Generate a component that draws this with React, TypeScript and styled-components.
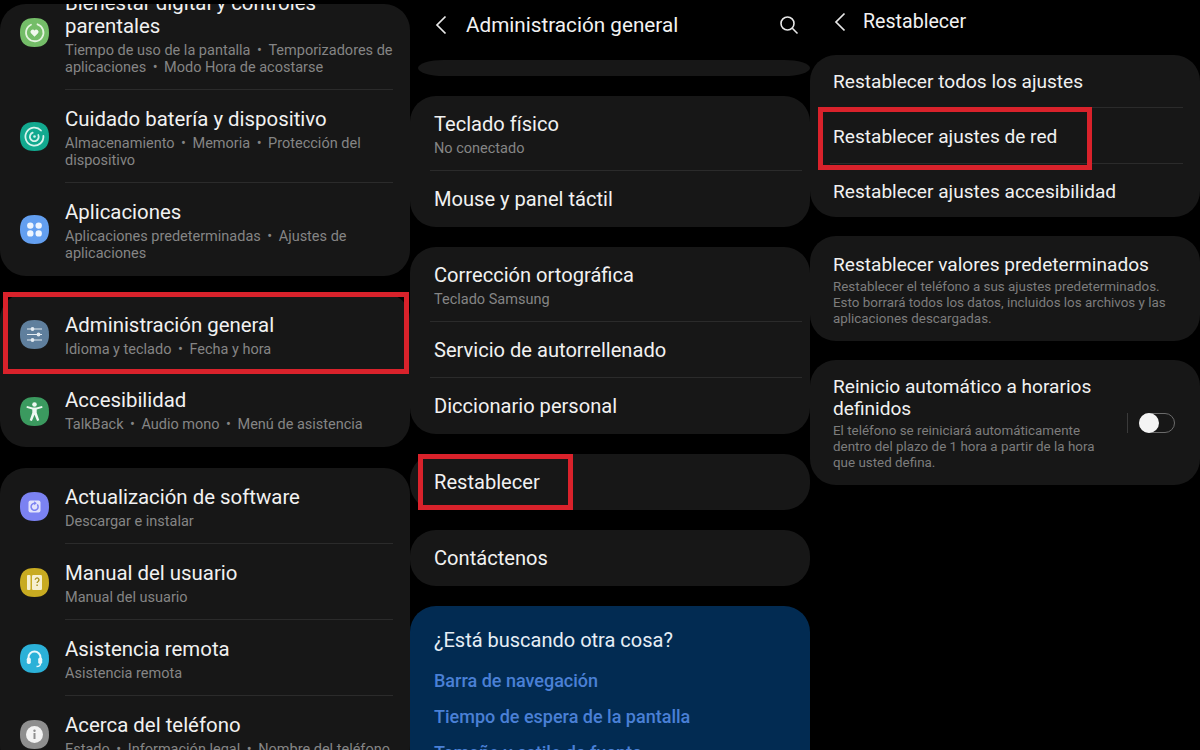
import React from "react";
import styled, { createGlobalStyle } from "styled-components";

const GlobalStyle = createGlobalStyle`
  html, body {
    margin: 0;
    padding: 0;
    background: #000;
    overflow: hidden;
  }
  * {
    box-sizing: border-box;
  }
`;

const Page = styled.div`
  display: grid;
  grid-template-columns: 410px 400px 390px;
  width: 1200px;
  height: 750px;
  overflow: hidden;
  background: #000;
  font-family: Roboto, "Liberation Sans", sans-serif;
`;

const Column = styled.div<{ $gap: number; $top: number }>`
  display: flex;
  flex-direction: column;
  gap: ${(p) => p.$gap}px;
  height: 750px;
  padding-top: ${(p) => p.$top}px;
  overflow: hidden;
`;

const Header = styled.div<{ $height: number; $left: number; $gap: number; $after?: number }>`
  display: flex;
  align-items: center;
  flex: none;
  gap: ${(p) => p.$gap}px;
  height: ${(p) => p.$height}px;
  margin-bottom: ${(p) => p.$after ?? 0}px;
  padding-left: ${(p) => p.$left}px;
  padding-right: 11px;
`;

const HeaderTitle = styled.div<{ $size: number }>`
  flex: 1;
  color: #f2f2f2;
  font-size: ${(p) => p.$size}px;
  line-height: 24px;
`;

const Card = styled.div<{ $clip?: boolean; $before?: number }>`
  position: relative;
  flex: none;
  margin-top: ${(p) => p.$before ?? 0}px;
  border-radius: 26px;
  background: #171717;
  overflow: ${(p) => (p.$clip ? "hidden" : "visible")};
`;

const StubCard = styled.div`
  flex: none;
  height: 16px;
  margin-top: -10px;
  margin-left: 8px;
  border-radius: 26px / 8px;
  background: #171717;
`;

const IconRow = styled.div<{ $height: number; $lift?: number }>`
  position: relative;
  display: flex;
  align-items: center;
  height: ${(p) => p.$height}px;
  margin-top: ${(p) => p.$lift ?? 0}px;
  padding-left: 20px;
`;

const RowBody = styled.div<{ $rule?: boolean; $push?: number }>`
  align-self: stretch;
  display: flex;
  flex: 1;
  flex-direction: column;
  justify-content: center;
  margin-left: 16px;
  margin-right: 17px;
  padding-top: ${(p) => p.$push ?? 4}px;
  border-bottom: ${(p) => (p.$rule ? "1px solid #2b2b2b" : "none")};
`;

const TextRow = styled.div<{ $height: number; $rule?: boolean; $ruleEnd: number; $push?: number }>`
  position: relative;
  display: flex;
  flex-direction: column;
  justify-content: center;
  height: ${(p) => p.$height}px;
  margin-left: 20px;
  margin-right: ${(p) => p.$ruleEnd}px;
  padding-top: ${(p) => p.$push ?? 0}px;
  padding-left: 4px;
  border-bottom: ${(p) => (p.$rule ? "1px solid #2b2b2b" : "none")};
`;

const Title = styled.div`
  color: #f1f1f1;
  font-size: 20.1px;
  line-height: 23px;
  white-space: nowrap;
`;

const MenuTitle = styled(Title)`
  font-size: 20.4px;
`;

const ResetTitle = styled(Title)`
  margin-left: -1px;
  font-size: 19.1px;
  line-height: 22px;
`;

const Sub = styled.div`
  margin-top: 4px;
  color: #858585;
  font-size: 14.5px;
  line-height: 17px;
  white-space: nowrap;
`;

const Dot = styled.span`
  margin: 0 6.5px;
`;

const Description = styled.div`
  margin-top: 3px;
  margin-left: -1px;
  color: #7d7d7d;
  font-size: 13.4px;
  line-height: 16px;
  white-space: nowrap;
`;

const ToggleCard = styled.div`
  display: flex;
  align-items: center;
  height: 125px;
  padding-left: 24px;
  padding-right: 25px;
`;

const ToggleText = styled.div`
  flex: 1;
  padding-top: 2px;
`;

const ToggleGroup = styled.div`
  display: flex;
  align-items: center;
  gap: 11px;
`;

const ToggleRule = styled.div`
  width: 1px;
  height: 20px;
  background: #3a3a3a;
`;

const ToggleTrack = styled.div`
  display: flex;
  width: 36px;
  height: 20px;
  border: 1px solid #6b6b6b;
  border-radius: 10px;
`;

const ToggleKnob = styled.div`
  width: 20px;
  height: 20px;
  margin: -1px;
  border-radius: 50%;
  background: #f4f4f4;
`;

const BlueCard = styled.div`
  flex: none;
  height: 170px;
  padding: 22px 24px 0;
  border-radius: 26px;
  background: #022b52;
`;

const BlueTitle = styled.div`
  color: #e6eef6;
  font-size: 20px;
  line-height: 24px;
`;

const LinkList = styled.div`
  display: flex;
  flex-direction: column;
  gap: 14px;
  margin-top: 18px;
`;

const BlueLink = styled.div`
  color: #4a80d6;
  font-size: 18px;
  font-weight: 500;
  line-height: 22px;
  white-space: nowrap;
`;

const Highlight = styled.div<{ $top: number; $left: number; $width: number; $height: number }>`
  position: absolute;
  top: ${(p) => p.$top}px;
  left: ${(p) => p.$left}px;
  width: ${(p) => p.$width}px;
  height: ${(p) => p.$height}px;
  border: 5px solid #d9222b;
  pointer-events: none;
`;

const Squircle = styled.svg`
  flex: none;
  width: 29px;
  height: 29px;
`;

const shape = "M14.5 0C24.5 0 29 4.5 29 14.5S24.5 29 14.5 29 0 24.5 0 14.5 4.5 0 14.5 0Z";

const AppIcon: React.FC<{ color: string; children: React.ReactNode }> = ({ color, children }) => (
  <Squircle viewBox="0 0 29 29">
    <path d={shape} fill={color} />
    {children}
  </Squircle>
);

const WellbeingIcon = () => (
  <AppIcon color="#74bd68">
    <path d="M11 6.700a8.700 8.700 0 1 0 6.500-.4" fill="none" stroke="#e4f3df" strokeWidth="1.800" strokeLinecap="round" />
    <path d="M14.500 18.800l-3.700-3.700a2.300 2.300 0 0 1 3.700-2.700 2.300 2.300 0 0 1 3.700 2.700Z" fill="#f1f9ee" />
  </AppIcon>
);

const DeviceCareIcon = () => (
  <AppIcon color="#12a98f">
    <path d="M21 8.500a9 9 0 1 0 2.400 5.500" fill="none" stroke="#d6f3ec" strokeWidth="1.800" strokeLinecap="round" />
    <path d="M18.300 13a4.400 4.400 0 1 1-5.600-2.300" fill="none" stroke="#d6f3ec" strokeWidth="1.800" strokeLinecap="round" />
    <circle cx="14.500" cy="14.500" r="1.300" fill="#d6f3ec" />
  </AppIcon>
);

const AppsIcon = () => (
  <AppIcon color="#639ff0">
    <circle cx="10.300" cy="10.600" r="3.200" fill="#eef5fe" />
    <circle cx="18.700" cy="10.600" r="3.200" fill="#eef5fe" />
    <circle cx="10.300" cy="18.400" r="3.200" fill="#eef5fe" />
    <circle cx="18.700" cy="18.400" r="3.200" fill="#eef5fe" />
  </AppIcon>
);

const SlidersIcon = () => (
  <AppIcon color="#5f7f9d">
    <path d="M7 9h15M7 14.500h15M7 20h15" stroke="#e3ebf2" strokeWidth="1.200" />
    <circle cx="12.500" cy="9" r="1.900" fill="#e3ebf2" />
    <circle cx="18.500" cy="14.500" r="1.900" fill="#e3ebf2" />
    <circle cx="12.500" cy="20" r="1.900" fill="#e3ebf2" />
  </AppIcon>
);

const AccessIcon = () => (
  <AppIcon color="#3b9a5f">
    <circle cx="14.500" cy="7.500" r="2.300" fill="#eef8f1" />
    <path d="M6.500 10.800l5.800 1.800v3.200l-2.600 7.400 2.200.7 2.600-6.200 2.600 6.200 2.200-.7-2.600-7.400v-3.200l5.800-1.800-.4-1.800-5.800 1.400h-3.600l-5.800-1.400Z" fill="#eef8f1" />
  </AppIcon>
);

const UpdateIcon = () => (
  <AppIcon color="#7b82f2">
    <rect x="8.500" y="8.500" width="12" height="12" rx="2" fill="#e2e3fc" />
    <path d="M17.600 13a3.500 3.500 0 1 1-3-1.700" fill="none" stroke="#7b82f2" strokeWidth="1.500" strokeLinecap="round" />
    <path d="M14.200 9.300l2.600 2-2.600 2Z" fill="#7b82f2" />
  </AppIcon>
);

const ManualIcon = () => (
  <AppIcon color="#c8ab21">
    <rect x="7" y="7" width="3.500" height="15" rx="1" fill="#f6f0cf" />
    <rect x="12" y="7" width="10" height="15" rx="1.200" fill="#f6f0cf" />
    <path d="M15.200 11.800a1.900 1.900 0 1 1 2.900 1.700c-.7.400-1 .8-1 1.500M17.100 16.500v1.500" fill="none" stroke="#a58c12" strokeWidth="1.300" />
  </AppIcon>
);

const RemoteIcon = () => (
  <AppIcon color="#2bb1d8">
    <path d="M8.500 15v-1.500a6 6 0 0 1 12 0V15" fill="none" stroke="#eaf8fc" strokeWidth="1.900" />
    <rect x="6.800" y="13.500" width="4" height="6.500" rx="1.800" fill="#eaf8fc" />
    <rect x="18.200" y="13.500" width="4" height="6.500" rx="1.800" fill="#eaf8fc" />
    <path d="M20.500 19.500c0 2-1.500 3-4 3" fill="none" stroke="#eaf8fc" strokeWidth="1.400" />
  </AppIcon>
);

const InfoIcon = () => (
  <AppIcon color="#8f8f8f">
    <circle cx="14.500" cy="14.500" r="8.500" fill="#f3f3f3" />
    <rect x="13.500" y="13" width="2" height="6" fill="#8f8f8f" />
    <circle cx="14.500" cy="10.800" r="1.200" fill="#8f8f8f" />
  </AppIcon>
);

const BackIcon = () => (
  <svg width="12" height="20" viewBox="0 0 12 20" fill="none" stroke="#e8e8e8" strokeWidth="1.700">
    <path d="M10.500 1.500L2 10l8.500 8.500" />
  </svg>
);

const SearchIcon = () => (
  <svg width="20" height="20" viewBox="0 0 20 20" fill="none" stroke="#e8e8e8" strokeWidth="1.600">
    <circle cx="8.500" cy="8.500" r="6.500" />
    <path d="M13.300 13.300L18.500 18.500" />
  </svg>
);

const Separated: React.FC<{ items: string[] }> = ({ items }) => (
  <>
    {items.map((item, i) => (
      <React.Fragment key={item}>
        {i > 0 && <Dot>•</Dot>}
        {item}
      </React.Fragment>
    ))}
  </>
);

export default function App() {
  return (
    <Page>
      <GlobalStyle />
      <Column $gap={17} $top={4}>
        <Card $clip>
          <IconRow $height={116} $lift={-30}>
            <WellbeingIcon />
            <RowBody $rule>
              <MenuTitle>
                Bienestar digital y controles
                <br />
                parentales
              </MenuTitle>
              <Sub>
                Tiempo de uso de la pantalla<Dot>•</Dot>Temporizadores de
                <br />
                aplicaciones<Dot>•</Dot>Modo Hora de acostarse
              </Sub>
            </RowBody>
          </IconRow>
          <IconRow $height={93}>
            <DeviceCareIcon />
            <RowBody $rule>
              <MenuTitle>Cuidado batería y dispositivo</MenuTitle>
              <Sub>
                Almacenamiento<Dot>•</Dot>Memoria<Dot>•</Dot>Protección del
                <br />
                dispositivo
              </Sub>
            </RowBody>
          </IconRow>
          <IconRow $height={93}>
            <AppsIcon />
            <RowBody>
              <MenuTitle>Aplicaciones</MenuTitle>
              <Sub>
                Aplicaciones predeterminadas<Dot>•</Dot>Ajustes de
                <br />
                aplicaciones
              </Sub>
            </RowBody>
          </IconRow>
        </Card>
        <Card>
          <IconRow $height={82}>
            <SlidersIcon />
            <RowBody>
              <MenuTitle>Administración general</MenuTitle>
              <Sub>
                <Separated items={["Idioma y teclado", "Fecha y hora"]} />
              </Sub>
            </RowBody>
            <Highlight $top={-1} $left={3} $width={406} $height={82} />
          </IconRow>
          <IconRow $height={72}>
            <AccessIcon />
            <RowBody $push={0}>
              <MenuTitle>Accesibilidad</MenuTitle>
              <Sub>
                <Separated items={["TalkBack", "Audio mono", "Menú de asistencia"]} />
              </Sub>
            </RowBody>
          </IconRow>
        </Card>
        <Card $before={4}>
          <IconRow $height={76}>
            <UpdateIcon />
            <RowBody $rule>
              <MenuTitle>Actualización de software</MenuTitle>
              <Sub>Descargar e instalar</Sub>
            </RowBody>
          </IconRow>
          <IconRow $height={76}>
            <ManualIcon />
            <RowBody $rule>
              <MenuTitle>Manual del usuario</MenuTitle>
              <Sub>Manual del usuario</Sub>
            </RowBody>
          </IconRow>
          <IconRow $height={76}>
            <RemoteIcon />
            <RowBody $rule>
              <MenuTitle>Asistencia remota</MenuTitle>
              <Sub>Asistencia remota</Sub>
            </RowBody>
          </IconRow>
          <IconRow $height={76}>
            <InfoIcon />
            <RowBody>
              <MenuTitle>Acerca del teléfono</MenuTitle>
              <Sub>
                <Separated items={["Estado", "Información legal", "Nombre del teléfono"]} />
              </Sub>
            </RowBody>
          </IconRow>
        </Card>
      </Column>

      <Column $gap={20} $top={0}>
        <Header $height={50} $left={25} $gap={19}>
          <BackIcon />
          <HeaderTitle $size={20.7}>Administración general</HeaderTitle>
          <SearchIcon />
        </Header>
        <StubCard />
        <Card>
          <TextRow $height={75} $rule $ruleEnd={8} $push={4}>
            <Title>Teclado físico</Title>
            <Sub>No conectado</Sub>
          </TextRow>
          <TextRow $height={56} $ruleEnd={8}>
            <Title>Mouse y panel táctil</Title>
          </TextRow>
        </Card>
        <Card>
          <TextRow $height={75} $rule $ruleEnd={8} $push={4}>
            <Title>Corrección ortográfica</Title>
            <Sub>Teclado Samsung</Sub>
          </TextRow>
          <TextRow $height={56} $rule $ruleEnd={8} $push={2}>
            <Title>Servicio de autorrellenado</Title>
          </TextRow>
          <TextRow $height={56} $ruleEnd={8}>
            <Title>Diccionario personal</Title>
          </TextRow>
        </Card>
        <Card>
          <TextRow $height={56} $ruleEnd={8}>
            <Title>Restablecer</Title>
          </TextRow>
          <Highlight $top={0} $left={8} $width={155} $height={56} />
        </Card>
        <Card>
          <TextRow $height={56} $ruleEnd={8}>
            <Title>Contáctenos</Title>
          </TextRow>
        </Card>
        <BlueCard>
          <BlueTitle>¿Está buscando otra cosa?</BlueTitle>
          <LinkList>
            <BlueLink>Barra de navegación</BlueLink>
            <BlueLink>Tiempo de espera de la pantalla</BlueLink>
            <BlueLink>Tamaño y estilo de fuente</BlueLink>
          </LinkList>
        </BlueCard>
      </Column>

      <Column $gap={19} $top={0}>
        <Header $height={44} $left={24} $gap={17} $after={-8}>
          <BackIcon />
          <HeaderTitle $size={19.6}>Restablecer</HeaderTitle>
        </Header>
        <Card>
          <TextRow $height={53} $rule $ruleEnd={17} $push={2}>
            <ResetTitle>Restablecer todos los ajustes</ResetTitle>
          </TextRow>
          <TextRow $height={56} $rule $ruleEnd={17} $push={3}>
            <ResetTitle>Restablecer ajustes de red</ResetTitle>
          </TextRow>
          <TextRow $height={53} $ruleEnd={17} $push={2}>
            <ResetTitle>Restablecer ajustes accesibilidad</ResetTitle>
          </TextRow>
          <Highlight $top={52} $left={8} $width={274} $height={63} />
        </Card>
        <Card>
          <TextRow $height={105} $ruleEnd={17} $push={4}>
            <ResetTitle>Restablecer valores predeterminados</ResetTitle>
            <Description>
              Restablecer el teléfono a sus ajustes predeterminados.
              <br />
              Esto borrará todos los datos, incluidos los archivos y las
              <br />
              aplicaciones descargadas.
            </Description>
          </TextRow>
        </Card>
        <Card>
          <ToggleCard>
            <ToggleText>
              <ResetTitle>
                Reinicio automático a horarios
                <br />
                definidos
              </ResetTitle>
              <Description>
                El teléfono se reiniciará automáticamente
                <br />
                dentro del plazo de 1 hora a partir de la hora
                <br />
                que usted defina.
              </Description>
            </ToggleText>
            <ToggleGroup>
              <ToggleRule />
              <ToggleTrack>
                <ToggleKnob />
              </ToggleTrack>
            </ToggleGroup>
          </ToggleCard>
        </Card>
      </Column>
    </Page>
  );
}
